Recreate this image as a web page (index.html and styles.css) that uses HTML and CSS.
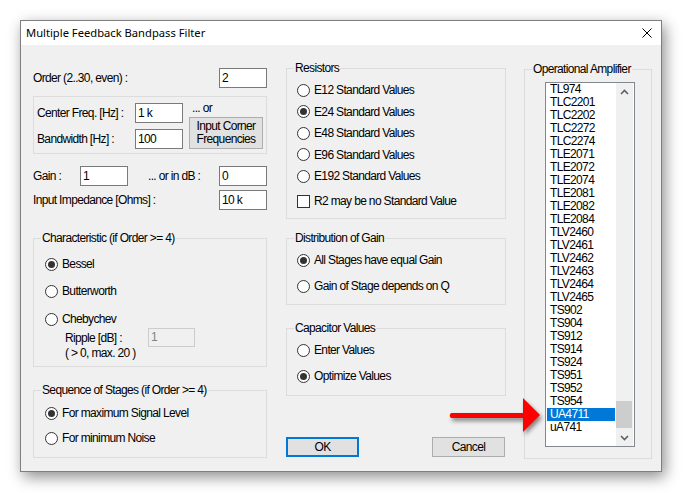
FILE: index.html
```html
<!DOCTYPE html>
<html>
<head>
<meta charset="utf-8">
<title>Multiple Feedback Bandpass Filter</title>
<link rel="stylesheet" href="styles.css">
</head>
<body>
<div class="window">
  <div class="titlebar">
    <span class="title">Multiple Feedback Bandpass Filter</span>
    <svg class="close" width="10" height="10" viewBox="0 0 10 10"><path d="M0.5 0.5 L9.5 9.5 M9.5 0.5 L0.5 9.5" stroke="#000" stroke-width="1" fill="none"/></svg>
  </div>
  <div class="client">
    <div class="col col-left">
      <div class="row row-order"><span>Order (2..30, even) :</span><span class="edit">2</span></div>
      <div class="freq">
        <span class="lbl">Center Freq. [Hz] :</span><span class="edit">1 k</span>
        <div class="freq-side">
          <span class="or">... or</span>
          <span class="btn btn-corner">Input Corner<br>Frequencies</span>
        </div>
        <span class="lbl">Bandwidth [Hz] :</span><span class="edit">100</span>
      </div>
      <div class="row row-gain"><span class="gain-lbl">Gain :</span><span class="edit">1</span><span class="db-lbl">... or in dB :</span><span class="edit">0</span></div>
      <div class="row row-imp"><span>Input Impedance [Ohms] :</span><span class="edit">10 k</span></div>

      <fieldset class="group g-charac">
        <legend>Characteristic (if Order &gt;= 4)</legend>
        <div class="gbody pl11">
          <div class="radio mt11"><span class="rb on"></span><span>Bessel</span></div>
          <div class="radio mt11"><span class="rb"></span><span>Butterworth</span></div>
          <div class="radio mt12"><span class="rb"></span><span>Chebychev</span></div>
          <div class="ripple"><span class="ripple-lbl">Ripple [dB] :</span><span class="edit dis">1</span></div>
          <div class="range">( &gt; 0, max. 20 )</div>
        </div>
      </fieldset>

      <fieldset class="group g-seq">
        <legend>Sequence of Stages (if Order &gt;= 4)</legend>
        <div class="gbody pl11">
          <div class="radio mt8"><span class="rb on"></span><span>For maximum Signal Level</span></div>
          <div class="radio mt9"><span class="rb"></span><span>For minimum Noise</span></div>
        </div>
      </fieldset>
    </div>

    <div class="col col-mid">
      <fieldset class="group g-res">
        <legend>Resistors</legend>
        <div class="gbody pl10">
          <div class="radio mt7"><span class="rb"></span><span>E12 Standard Values</span></div>
          <div class="radio mt55"><span class="rb on"></span><span>E24 Standard Values</span></div>
          <div class="radio mt55"><span class="rb"></span><span>E48 Standard Values</span></div>
          <div class="radio mt55"><span class="rb"></span><span>E96 Standard Values</span></div>
          <div class="radio mt55"><span class="rb"></span><span>E192 Standard Values</span></div>
          <div class="radio mt9"><span class="cb"></span><span>R2 may be no Standard Value</span></div>
        </div>
      </fieldset>

      <fieldset class="group g-dist">
        <legend>Distribution of Gain</legend>
        <div class="gbody pl10">
          <div class="radio mt7"><span class="rb on"></span><span>All Stages have equal Gain</span></div>
          <div class="radio mt10"><span class="rb"></span><span>Gain of Stage depends on Q</span></div>
        </div>
      </fieldset>

      <fieldset class="group g-cap">
        <legend>Capacitor Values</legend>
        <div class="gbody pl10">
          <div class="radio mt7"><span class="rb"></span><span>Enter Values</span></div>
          <div class="radio mt10"><span class="rb on"></span><span>Optimize Values</span></div>
        </div>
      </fieldset>

      <div class="buttons">
        <span class="btn btn-ok">OK</span>
        <span class="btn btn-cancel">Cancel</span>
      </div>
    </div>

    <div class="col col-right">
      <fieldset class="group g-opamp">
        <legend>Operational Amplifier</legend>
        <div class="gbody list-wrap">
          <div class="listbox">
            <div class="items">
              <div class="item">TL974</div>
              <div class="item">TLC2201</div>
              <div class="item">TLC2202</div>
              <div class="item">TLC2272</div>
              <div class="item">TLC2274</div>
              <div class="item">TLE2071</div>
              <div class="item">TLE2072</div>
              <div class="item">TLE2074</div>
              <div class="item">TLE2081</div>
              <div class="item">TLE2082</div>
              <div class="item">TLE2084</div>
              <div class="item">TLV2460</div>
              <div class="item">TLV2461</div>
              <div class="item">TLV2462</div>
              <div class="item">TLV2463</div>
              <div class="item">TLV2464</div>
              <div class="item">TLV2465</div>
              <div class="item">TS902</div>
              <div class="item">TS904</div>
              <div class="item">TS912</div>
              <div class="item">TS914</div>
              <div class="item">TS924</div>
              <div class="item">TS951</div>
              <div class="item">TS952</div>
              <div class="item">TS954</div>
              <div class="item sel">UA4711</div>
              <div class="item">uA741</div>
            </div>
            <div class="scroll">
              <div class="sbtn"><svg width="9" height="6" viewBox="0 0 9 6"><path d="M1 5 L4.5 1.5 L8 5" stroke="#606060" stroke-width="1.6" fill="none"/></svg></div>
              <div class="track"><div class="thumb"></div></div>
              <div class="sbtn"><svg width="9" height="6" viewBox="0 0 9 6"><path d="M1 1 L4.5 4.5 L8 1" stroke="#606060" stroke-width="1.6" fill="none"/></svg></div>
            </div>
          </div>
        </div>
      </fieldset>
    </div>
  </div>
</div>

<svg class="arrow" width="100" height="44" viewBox="0 0 100 44">
  <path d="M8 20 L80 20 L80 5 L97 22 L80 39 L80 25 L8 25 Q5.5 22.5 8 20 Z" fill="#ff0000"/>
</svg>
</body>
</html>
```

FILE: styles.css
```css
* { box-sizing: border-box; }

html, body { margin: 0; padding: 0; }

body {
  width: 683px;
  height: 493px;
  background: #ffffff;
  padding: 20px 0 0 20px;
  font-family: "Liberation Sans", Arial, sans-serif;
  font-size: 12px;
  letter-spacing: -0.65px;
  color: #000;
  overflow: hidden;
  position: relative;
}

.window {
  width: 642px;
  height: 452px;
  border: 1px solid #7f7f7f;
  background: #f0f0f0;
  box-shadow: 3px 5px 14px rgba(0, 0, 0, 0.45);
  display: flex;
  flex-direction: column;
}

.titlebar {
  height: 24px;
  flex: none;
  background: #ffffff;
  display: flex;
  align-items: center;
  justify-content: space-between;
  padding: 0 9px 0 5px;
}

.title {
  font-family: "Noto Sans", "Open Sans", sans-serif;
  font-size: 11.2px;
  letter-spacing: 0;
  line-height: 16px;
}

.client {
  flex: 1;
  display: flex;
  padding: 0 9px 0 12px;
  white-space: nowrap;
}

.col { display: flex; flex-direction: column; }
.col-left { width: 234px; }
.col-mid { width: 220px; margin-left: 19px; }
.col-right { width: 128px; margin-left: 18px; }

.row {
  height: 20px;
  display: flex;
  align-items: center;
}

.row-order { margin-top: 23px; justify-content: space-between; }
.row-gain { margin-top: 12px; }
.row-imp { margin-top: 4px; justify-content: space-between; }

.gain-lbl { width: 47px; }
.db-lbl { margin-left: 20px; flex: 1; }

.edit {
  width: 48px;
  height: 20px;
  border: 1px solid #7a7a7a;
  background: #ffffff;
  padding-left: 2px;
  line-height: 18px;
}

.edit.dis {
  width: 47px;
  height: 19px;
  line-height: 17px;
  border-color: #cccccc;
  background: #f0f0f0;
  color: #838383;
}

.freq {
  margin-top: 8px;
  height: 58px;
  border: 1px solid #dcdcdc;
  padding: 6px 0 0 3px;
  display: grid;
  grid-template-columns: 98px 48px auto;
  grid-template-rows: 20px 20px;
  row-gap: 6px;
}

.freq .lbl { align-self: center; }

.freq-side {
  grid-column: 3;
  grid-row: 1 / span 2;
  margin: -2px 0 0 6px;
  display: flex;
  flex-direction: column;
}

.or { line-height: 14px; height: 14px; padding-left: 3px; }

.btn {
  background: #e1e1e1;
  border: 1px solid #adadad;
  display: flex;
  align-items: center;
  justify-content: center;
  text-align: center;
}

.btn-corner {
  margin-top: 2px;
  width: 74px;
  height: 34px;
  line-height: 13px;
}

/* group boxes */
.group {
  margin: 0;
  padding: 0;
  min-width: 0;
  border: 1px solid #dcdcdc;
}

.group legend {
  padding: 0 1px;
  margin-left: 7px;
  line-height: 14px;
}

.gbody { display: flex; flex-direction: column; }
.pl10 { padding-left: 10px; }
.pl11 { padding-left: 11px; }

.g-charac { margin-top: 21px; height: 136px; }
.g-seq { margin-top: 16px; height: 75px; }
.g-res { margin-top: 16px; height: 158px; }
.g-dist { margin-top: 12px; height: 74px; }
.g-cap { margin-top: 16px; height: 75px; }
.g-opamp { margin-top: 17px; height: 397px; }

.radio {
  height: 16px;
  display: flex;
  align-items: center;
  gap: 4px;
}

.mt7 { margin-top: 7px; }
.mt8 { margin-top: 8px; }
.mt9 { margin-top: 9px; }
.mt10 { margin-top: 10px; }
.mt11 { margin-top: 11px; }
.mt12 { margin-top: 12px; }
.mt55 { margin-top: 5.5px; }

.rb {
  width: 13px;
  height: 13px;
  flex: none;
  border: 1px solid #333333;
  border-radius: 50%;
  background: #ffffff;
  position: relative;
}

.rb.on::after {
  content: "";
  position: absolute;
  left: 2px;
  top: 2px;
  width: 7px;
  height: 7px;
  border-radius: 50%;
  background: #333333;
}

.cb {
  width: 13px;
  height: 13px;
  flex: none;
  border: 1px solid #333333;
  background: #ffffff;
}

.ripple {
  margin-top: 1px;
  padding-left: 20px;
  height: 19px;
  display: flex;
  align-items: center;
}

.ripple-lbl { width: 83px; }

.range {
  margin-top: -1px;
  padding-left: 20px;
  line-height: 14px;
}

.buttons {
  margin-top: 41px;
  display: flex;
  justify-content: space-between;
  padding-right: 1px;
}

.btn-ok, .btn-cancel { width: 73px; height: 20px; }
.btn-ok { border: 2px solid #0078d7; }

/* list box */
.list-wrap { padding: 6px 0 0 20px; }

.listbox {
  width: 90px;
  height: 365px;
  border: 1px solid #828790;
  background: #ffffff;
  display: flex;
}

.items {
  width: 70px;
  padding-left: 1px;
  display: flex;
  flex-direction: column;
}

.item {
  width: 68px;
  height: 13px;
  line-height: 13px;
  padding-left: 3px;
}

.item.sel { background: #0078d7; color: #ffffff; }

.scroll {
  width: 17px;
  background: #f0f0f0;
  display: flex;
  flex-direction: column;
}

.sbtn {
  height: 17px;
  flex: none;
  display: flex;
  align-items: center;
  justify-content: center;
}

.track { flex: 1; }

.thumb {
  margin: 301px 1px 0 0;
  height: 27px;
  background: #cdcdcd;
}

.arrow {
  position: absolute;
  left: 443px;
  top: 393px;
  filter: drop-shadow(2px 3px 2px rgba(0, 0, 0, 0.45));
}
```
